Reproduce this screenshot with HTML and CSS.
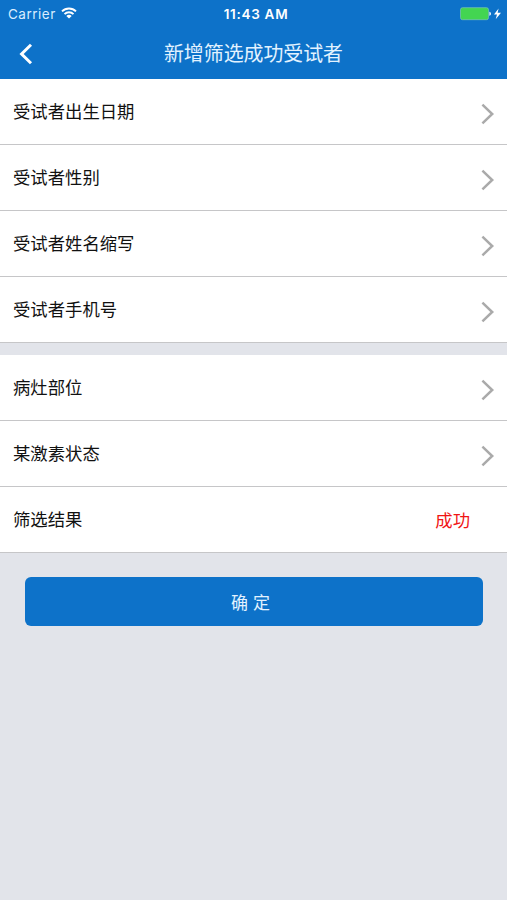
FILE: index.html
```html
<!DOCTYPE html>
<html lang="zh-CN">
<head>
  <meta charset="UTF-8">
  <title>新增筛选成功受试者</title>
  <link rel="stylesheet" href="styles.css">
</head>
<body>
<div id="app">
  <header>
    <div class="status">
      <div class="carrier">
        <span>Carrier</span>
        <svg class="wifi" width="16" height="12" viewBox="0 0 16 12" fill="none" stroke="#fff" stroke-width="1.9">
          <path d="M1 4.4a10 10 0 0 1 14 0"/>
          <path d="M3.5 7.2a6.3 6.3 0 0 1 9 0"/>
          <path d="M8 11.6L5.3 9a3.8 3.8 0 0 1 5.4 0z" fill="#fff" stroke="none"/>
        </svg>
      </div>
      <div class="time">11:43 AM</div>
      <div class="battery">
        <svg width="42" height="14" viewBox="0 0 42 14">
          <rect x="0.5" y="0.7" width="28" height="12" rx="2" fill="#43d551" stroke="#7cc5b4" stroke-width="0.7"/>
          <path d="M29.4 4.7c2 .2 2 3.8 0 4z" fill="#fff"/>
          <path d="M38.6 1.5L34 7.4h3L35.7 12.2l5.3-6.400h-3.4z" fill="#fff"/>
        </svg>
      </div>
    </div>
    <div class="nav">
      <svg class="back" width="14" height="22" viewBox="0 0 14 22" fill="none" stroke="#fff" stroke-width="3">
        <path d="M12 1.8L2.6 11l9.4 9.2"/>
      </svg>
      <h1>新增筛选成功受试者</h1>
    </div>
  </header>

  <ul class="list">
    <li><span>受试者出生日期</span><svg class="arrow" viewBox="0 0 14 22"><path d="M1.4 1.7L11.2 11l-9.8 9.3"/></svg></li>
    <li><span>受试者性别</span><svg class="arrow" viewBox="0 0 14 22"><path d="M1.4 1.7L11.2 11l-9.8 9.3"/></svg></li>
    <li><span>受试者姓名缩写</span><svg class="arrow" viewBox="0 0 14 22"><path d="M1.4 1.7L11.2 11l-9.8 9.3"/></svg></li>
    <li><span>受试者手机号</span><svg class="arrow" viewBox="0 0 14 22"><path d="M1.4 1.7L11.2 11l-9.8 9.3"/></svg></li>
  </ul>

  <ul class="list">
    <li><span>病灶部位</span><svg class="arrow" viewBox="0 0 14 22"><path d="M1.4 1.7L11.2 11l-9.8 9.3"/></svg></li>
    <li><span>某激素状态</span><svg class="arrow" viewBox="0 0 14 22"><path d="M1.4 1.7L11.2 11l-9.8 9.3"/></svg></li>
    <li><span>筛选结果</span><span class="result">成功</span></li>
  </ul>

  <button class="sure">确 定</button>
</div>
</body>
</html>
```

FILE: styles.css
```css
* {
  box-sizing: border-box;
}

body {
  margin: 0;
  background-color: #e2e4ea;
  font-family: Inter, "Noto Sans CJK SC", sans-serif;
  color: #111;
}

header {
  height: 79px;
  background-color: #0d72c9;
  color: #fff;
}

.status {
  display: grid;
  grid-template-columns: 1fr auto 1fr;
  align-items: center;
  height: 27px;
  padding: 0 5px 0 8px;
  font-size: 13.5px;
}

.carrier {
  display: flex;
  align-items: center;
  gap: 5px;
  color: #d9edff;
  letter-spacing: 0.5px;
}

.wifi {
  margin-top: -2px;
}

.time {
  padding-left: 2px;
  font-weight: 600;
  letter-spacing: 0.7px;
}

.battery {
  display: flex;
  justify-content: flex-end;
}

.nav {
  display: grid;
  grid-template-columns: 40px 1fr 40px;
  align-items: center;
  height: 52px;
}

.back {
  margin: 0 0 0 19px;
}

h1 {
  margin: 1px 0 0;
  font-size: 19.9px;
  font-weight: 400;
  line-height: 52px;
  text-align: center;
  color: #e2f2ff;
}

.list {
  margin: 0 0 12px;
  padding: 0;
  list-style: none;
}

.list li {
  display: flex;
  align-items: center;
  justify-content: space-between;
  height: 66px;
  padding: 0 12px 2px 13px;
  background-color: #fff;
  border-bottom: 1px solid #c6c6c8;
  font-size: 17.35px;
}

.arrow {
  width: 14px;
  height: 22px;
  margin-top: 6px;
  fill: none;
  stroke: #aaa;
  stroke-width: 2.5;
}

.list .result {
  margin: 2px 25px 0 0;
  color: #f01414;
}

.sure {
  display: block;
  width: 458px;
  height: 49px;
  margin: 24px auto 0 25px;
  padding: 0 7px 0 0;
  border: 0;
  border-radius: 6px;
  background-color: #0d72c9;
  color: #e2f2ff;
  font-family: inherit;
  font-size: 17px;
}
```
